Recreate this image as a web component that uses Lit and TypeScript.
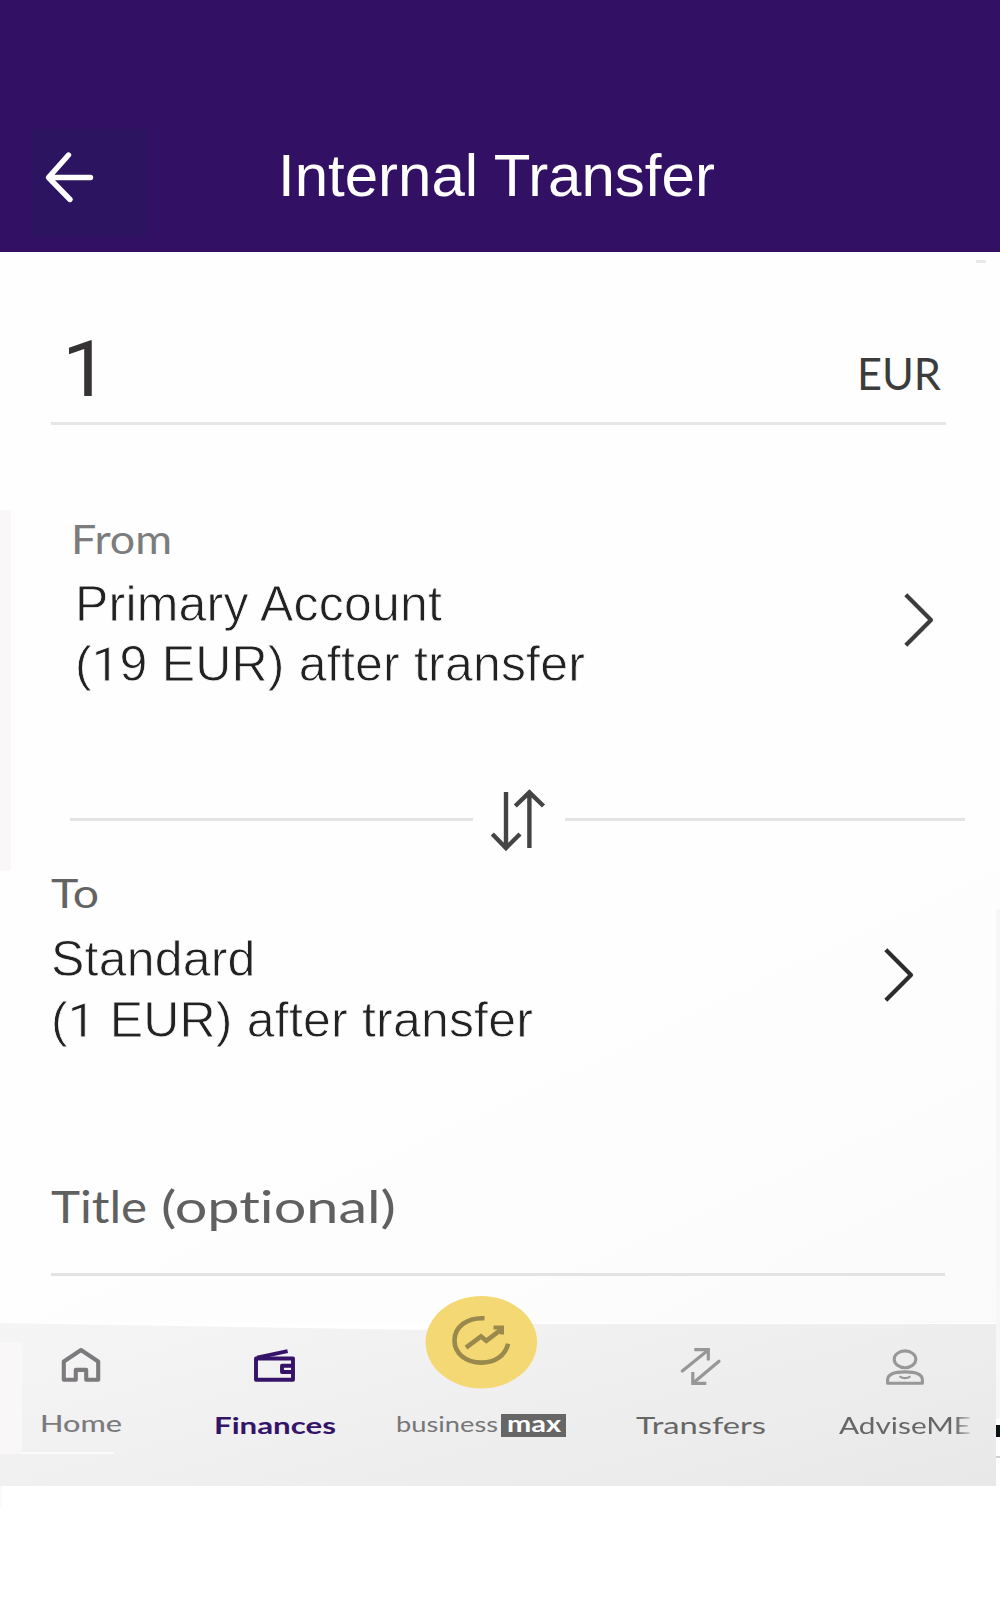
import { LitElement, html, css, svg } from "lit";
import { customElement, property } from "lit/decorators.js";

/** A single line of text set to a fixed measure. */
@customElement("fit-text")
class FitText extends LitElement {
  @property() text = "";
  @property({ type: Number }) width = 100;
  @property({ type: Number }) height = 40;
  @property({ type: Number }) baseline = 30;
  static styles = css`
    :host { display: block; font-variant-ligatures: none; }
    svg { display: block; overflow: visible; }
    text { fill: currentColor; }
  `;
  render() {
    return html`<svg width=${this.width} height=${this.height}>
      <text x="0" y=${this.baseline} textLength=${this.width} lengthAdjust="spacingAndGlyphs">${this.text}</text>
    </svg>`;
  }
}

const icons: Record<string, unknown> = {
  home: svg`<path d="M63.8 1379.8V1361.5L81 1350L98.2 1361.5V1379.8H86.2V1369.9H75.8V1379.8Z" fill="none" stroke="#7c7a7d" stroke-width="4.1" stroke-linejoin="round"/>`,
  wallet: svg`<g fill="none" stroke="#351368" stroke-width="3.9" stroke-linejoin="round"><path d="M256 1358.5H293V1379.8H256Z"/><path d="M257 1357.6L287.6 1351.2"/><path d="M293 1365.8H282V1372H293"/></g>`,
  growth: svg`<ellipse cx="481.3" cy="1342.2" rx="55.7" ry="46.2" fill="#f3d873"/>
    <g fill="none" stroke="#9a894c" stroke-width="4.6"><path d="M484.5 1318.3C467 1317.3 454.5 1327 454.5 1340.5C454.5 1353.5 466 1362.6 481.5 1362.6C495 1362.6 505.5 1355.5 508 1343.7"/><path d="M466 1347.6L481 1336.5L486.3 1340.8L502 1328.8"/><path d="M493.5 1327.5H502V1334.5" stroke-width="4"/></g>`,
  transfers: svg`<g fill="none" stroke="#979797" stroke-width="3.2" stroke-linecap="round"><path d="M682.3 1371L708 1350.3"/><path d="M694.3 1349.6H708.3V1360.6" stroke-linecap="butt"/><path d="M719 1361.3L693.5 1382.7"/><path d="M692.8 1372V1383.3H706.3" stroke-linecap="butt"/></g>`,
  advisor: svg`<g fill="none" stroke="#979797" stroke-width="3.1" stroke-linejoin="round"><ellipse cx="905" cy="1359.3" rx="10.8" ry="8.4"/><path d="M887.6 1383.3V1379.5C888 1374.5 895 1371.9 905 1371.9S922 1374.5 922.4 1379.5V1383.3Z"/><path d="M899.5 1376.4Q905 1379.8 910.5 1376.4" stroke-width="2.2"/></g>`,
};

@customElement("nav-icon")
class NavIcon extends LitElement {
  @property() name = "home";
  @property({ type: Number }) center = 0;
  static styles = css`
    :host { display: block; height: 80px; }
    svg { display: block; overflow: visible; }
  `;
  render() {
    return html`<svg width="80" height="80" viewBox="${this.center - 40} 1323 80 80">${icons[this.name]}</svg>`;
  }
}

@customElement("app-root")
class AppRoot extends LitElement {
  static styles = css`
    :host {
      display: block;
      position: relative;
      width: 1000px;
      height: 1600px;
      overflow: hidden;
      background: #fff;
      font-family: "Liberation Sans", Arial, sans-serif;
    }
    svg { display: block; flex: none; }
    header { display: flex; height: 252px; background: #321165; }
    .back { width: 116px; height: 108px; margin: 129px 0 0 32px; background: #2c1460; }
    h1 {
      margin: 126px 0 0 130px;
      font-size: 60px;
      font-weight: 400;
      line-height: 100px;
      color: #fff;
      white-space: nowrap;
    }
    main {
      height: 1071px;
      background: linear-gradient(155deg, #fefefe 62%, #fdfdfd 82%, #fafafa 100%);
    }
    .amount {
      display: flex;
      justify-content: space-between;
      width: 879px;
      height: 170px;
      margin-left: 51px;
      padding: 0 5px 0 11px;
      border-bottom: 3px solid #e6e6e6;
    }
    .value { font: 400 77px Roboto, sans-serif; color: #353334; }
    .currency { font: 400 45px Lato, sans-serif; color: #3c3c3c; -webkit-text-stroke: 0.5px #fefefe; }
    .from { padding: 85px 0 0 72px; }
    .caption { font: 400 40px Lato, sans-serif; color: #7c7c7c; -webkit-text-stroke: 0.6px #fefefe; }
    .from .caption { margin-left: -1px; }
    .dark { color: #636363; }
    .row { display: flex; justify-content: space-between; }
    .from .row { width: 859px; padding-left: 3px; }
    .account {
      padding-top: 1px;
      font-size: 50px;
      line-height: 60.7px;
      height: 120.4px;
      letter-spacing: 0.2px;
      color: #222;
      white-space: nowrap;
      -webkit-text-stroke: 0.8px #fefefe;
    }
    .one { font-family: Roboto, sans-serif; font-size: 49px; line-height: 0; }
    .chevron { margin-top: 19px; }
    .swap { display: flex; align-items: center; width: 895px; height: 64px; margin: 94px 0 0 70px; }
    .rule { height: 3px; background: #e4e4e4; }
    .rule.left { width: 403px; }
    .rule.right { width: 400px; }
    .to { padding-left: 51px; }
    .to .row { width: 863px; }
    .title {
      display: flex;
      width: 894px;
      height: 224px;
      margin-left: 51px;
      border-bottom: 3px solid #e3e3e3;
      font: 400 45px Lato, sans-serif;
      color: #606060;
      gap: 14px;
      -webkit-text-stroke: 0.6px #fefefe;
    }
    nav {
      display: grid;
      grid-template-columns: 162px 226px 186px 254px 154px;
      position: relative;
      width: 996px;
      height: 163px;
    }
    .bar {
      position: absolute;
      inset: 0;
      background: linear-gradient(165deg, #f5f5f5, #efefef 50%, #e9e8e8);
      clip-path: polygon(0 0, 430px 7px, 480px 7px, 535px 1px, 100% 1px, 100% 100%, 0 100%);
    }
    .item { display: flex; flex-direction: column; align-items: center; position: relative; }
    .label { font: 400 23.5px Lato, sans-serif; color: #666; }
    .home { color: #7c7a7d; font-weight: 500; -webkit-text-stroke: 0.4px #7c7a7d; }
    .active { font-weight: 700; color: #351368; }
    .brand { display: flex; gap: 3px; }
    .business { font-size: 22px; color: #777; }
    .max { width: 54px; height: 23px; margin-top: 11px; padding-left: 6px; padding-right: 5px; background: #666; color: #fff; font: 700 23px Lato, sans-serif; }
    .fade { -webkit-mask-image: linear-gradient(90deg, #000 88%, #0003); }
    .edge { position: absolute; }
    .e1 { left: 0; top: 510px; width: 11px; height: 361px; background: #f9f7f8; }
    .e2 { left: 996px; top: 909px; width: 4px; height: 510px; background: #f7f7f7; }
    .e3 { left: 976px; top: 260px; width: 10px; height: 3px; background: #e9e9e9; }
    .e4 { left: 996px; top: 1425px; width: 4px; height: 12px; background: #0b1213; }
    .e5 { left: 996px; top: 1456px; width: 4px; height: 2px; background: #d0d0d0; }
    .e6 { left: 0; top: 1342px; width: 22px; height: 112px; background: #f9f7f8; }
    .e7 { left: 22px; top: 1452px; width: 92px; height: 2px; background: #fbfbfb; }
    .e8 { left: 0; top: 1486px; width: 2px; height: 22px; background: #fafafa; }
  `;

  private chevron(color: string) {
    return html`<svg class="chevron" width="30" height="55" viewBox="0 0 30 55">
      <path d="M1.8 2.8L27 28L1.8 53.2" fill="none" stroke=${color} stroke-width="4.2" stroke-linejoin="round"/>
    </svg>`;
  }

  render() {
    return html`
      <header>
        <div class="back">
          <svg width="116" height="108" viewBox="32 129 116 108">
            <path d="M68.5 155L48.5 177.5L70 199.5M49 177.5H90.5" fill="none" stroke="#fff" stroke-width="5.4" stroke-linecap="round" stroke-linejoin="round"/>
          </svg>
        </div>
        <h1>Internal Transfer</h1>
      </header>
      <main>
        <section class="amount">
          <fit-text class="value" text="1" width="47" height="170" baseline="144"></fit-text>
          <fit-text class="currency" text="EUR" width="84" height="170" baseline="137.5"></fit-text>
        </section>
        <section class="from">
          <fit-text class="caption" text="From" width="101" height="62.5" baseline="43.5"></fit-text>
          <div class="row">
            <div class="account">Primary Account<br />(<span class="one">1</span>9 EUR) after transfer</div>
            ${this.chevron("#3c3c3c")}
          </div>
        </section>
        <div class="swap">
          <div class="rule left"></div>
          <svg width="92" height="64" viewBox="473 788 92 64">
            <g fill="none" stroke="#444" stroke-width="4.4">
              <path d="M506 792V848M492.3 834L506 848L520 834"/>
              <path d="M529.4 848V793M515.3 806L529.4 792.3L543.5 806"/>
            </g>
          </svg>
          <div class="rule right"></div>
        </div>
        <section class="to">
          <fit-text class="caption dark" text="To" width="48" height="76" baseline="55.5"></fit-text>
          <div class="row">
            <div class="account">Standard<br />(<span class="one">1</span> EUR) after transfer</div>
            ${this.chevron("#2c2c2c")}
          </div>
        </section>
        <section class="title">
          <fit-text text="Title" width="96" height="223" baseline="173.7"></fit-text>
          <fit-text text="(optional)" width="235" height="223" baseline="173.7"></fit-text>
        </section>
      </main>
      <nav>
        <div class="bar"></div>
        <div class="item">
          <nav-icon name="home" center="81"></nav-icon>
          <fit-text class="label home" text="Home" width="82" height="40" baseline="29"></fit-text>
        </div>
        <div class="item">
          <nav-icon name="wallet" center="275"></nav-icon>
          <fit-text class="label active" text="Finances" width="122" height="40" baseline="31.3"></fit-text>
        </div>
        <div class="item">
          <nav-icon name="growth" center="481"></nav-icon>
          <div class="brand">
            <fit-text class="label business" text="business" width="102" height="40" baseline="28.7"></fit-text>
            <fit-text class="max" text="max" width="54" height="23" baseline="17.5"></fit-text>
          </div>
        </div>
        <div class="item">
          <nav-icon name="transfers" center="701"></nav-icon>
          <fit-text class="label" text="Transfers" width="130" height="40" baseline="31"></fit-text>
        </div>
        <div class="item">
          <nav-icon name="advisor" center="905"></nav-icon>
          <fit-text class="label fade" text="AdviseME" width="132" height="40" baseline="31"></fit-text>
        </div>
      </nav>
      <div class="edge e1"></div>
      <div class="edge e2"></div>
      <div class="edge e3"></div>
      <div class="edge e4"></div>
      <div class="edge e5"></div>
      <div class="edge e6"></div>
      <div class="edge e7"></div>
      <div class="edge e8"></div>
    `;
  }
}
